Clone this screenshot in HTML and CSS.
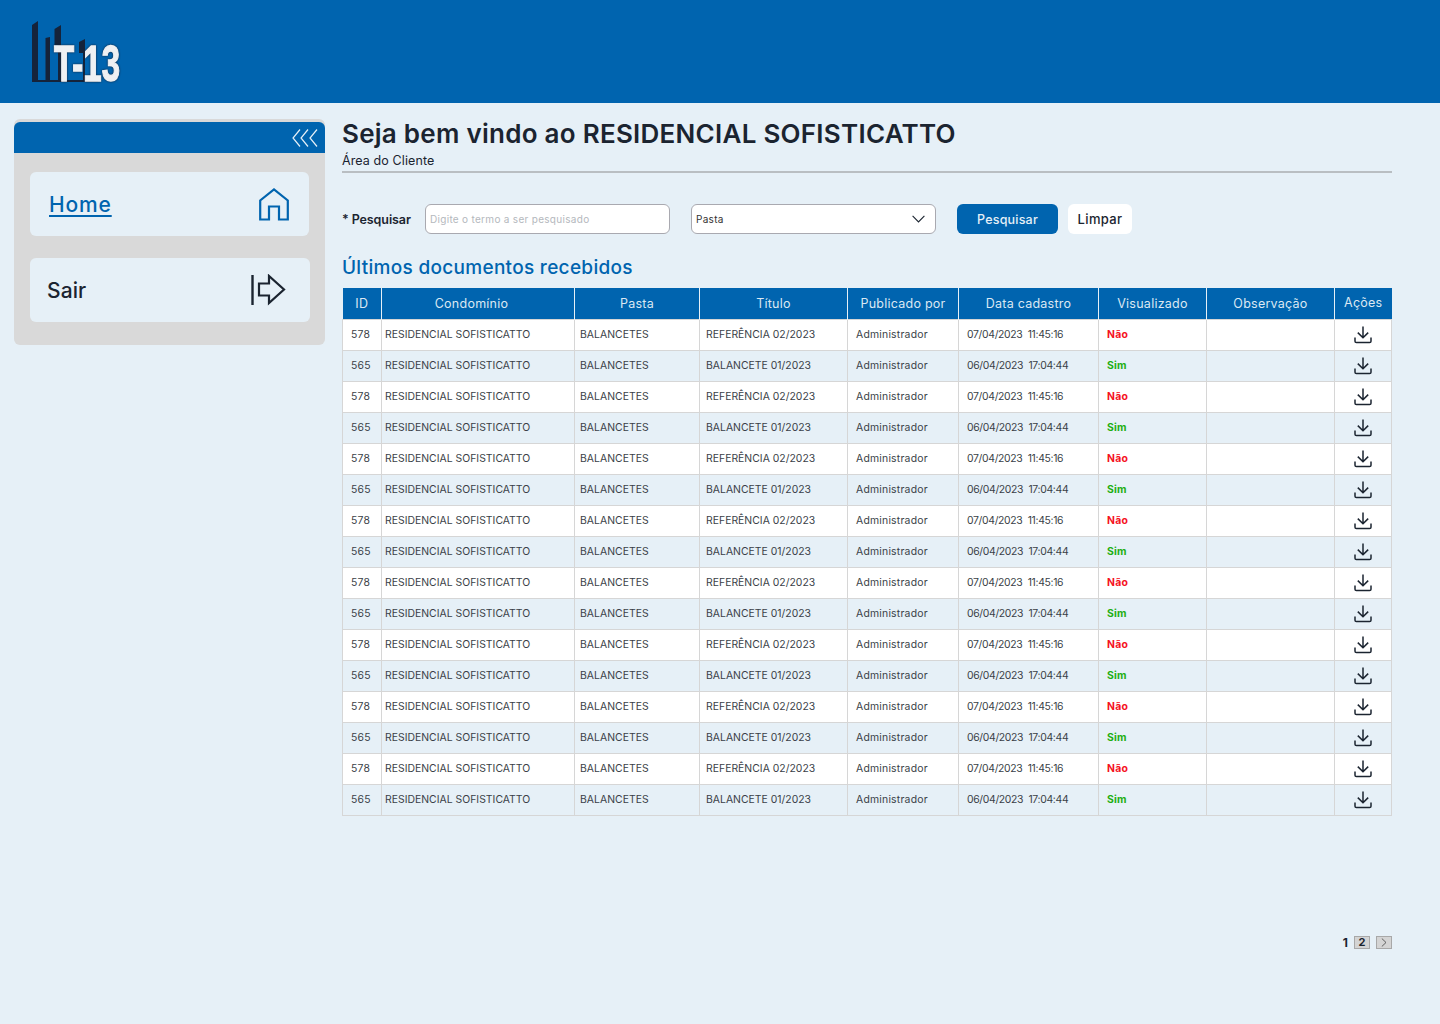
FILE: index.html
```html
<!DOCTYPE html>
<html lang="pt-BR">
<head>
<meta charset="utf-8">
<title>Área do Cliente</title>
<link rel="stylesheet" href="styles.css">
</head>
<body>
<svg class="defs" width="0" height="0" aria-hidden="true">
  <symbol id="dl" viewBox="0 0 18 18">
    <path d="M9 0.5V11.5M3.8 6.6L9 11.8L14.2 6.6M1 11.5V15.2Q1 16.6 2.4 16.6H15.6Q17 16.6 17 15.2V11.5" fill="none" stroke="#1b2430" stroke-width="1.5"/>
  </symbol>
</svg>
<header class="topbar">
  <svg class="logo" width="130" height="70" viewBox="0 0 130 70">
    <path class="logo-b" d="M2 64V7L8 3V64ZM15.5 64V20L20 19V64ZM24.5 11L31 7V64H28V27H24.5ZM49 24L55 21V64H53V35H49ZM2 62H68V64H2Z"/>
    <text class="logo-t" x="24" y="63" textLength="66" lengthAdjust="spacingAndGlyphs">T-13</text>
  </svg>
</header>
<div class="page">
  <aside class="sidebar">
    <div class="side-head">
      <svg width="26" height="20" viewBox="0 0 26 20"><path d="M8 1.5L1 10L8 18.5M16 1.5L9 10L16 18.5M25 1.5L18 10L25 18.5" fill="none" stroke="#e6f0f7" stroke-width="1.2"/></svg>
    </div>
    <nav class="side-nav">
      <a class="nav-card nav-home" href="#">
        <span class="nav-home-label">Home</span>
        <svg width="30" height="33" viewBox="0 0 30 33"><path d="M1.2 31.5V12.5L15 1.5L28.8 12.5V31.5H20V18.5H10V31.5Z" fill="none" stroke="#0064af" stroke-width="2.2"/></svg>
      </a>
      <a class="nav-card nav-exit" href="#">
        <span>Sair</span>
        <svg width="35" height="32" viewBox="0 0 35 32"><path d="M1.5 1V31" fill="none" stroke="#1b2430" stroke-width="2.4"/><path d="M8 9.5H18V2L33 15.5L18 29V21.5H8Z" fill="none" stroke="#1b2430" stroke-width="2.2"/></svg>
      </a>
    </nav>
  </aside>
  <main class="content">
    <h1 class="title">Seja bem vindo ao RESIDENCIAL SOFISTICATTO</h1>
    <p class="subtitle">Área do Cliente</p>
    <form class="search">
      <label class="search-label" for="q">* Pesquisar</label>
      <input class="field field-text" id="q" type="text" placeholder="Digite o termo a ser pesquisado">
      <div class="field field-select">
        <span>Pasta</span>
        <svg width="13" height="8" viewBox="0 0 13 8"><path d="M0.6 0.8L6.5 7L12.4 0.8" fill="none" stroke="#1b2430" stroke-width="1.1"/></svg>
      </div>
      <button class="btn btn-primary" type="button">Pesquisar</button>
      <button class="btn btn-light" type="button">Limpar</button>
    </form>
    <h2 class="section">Últimos documentos recebidos</h2>
    <table class="docs">
      <colgroup>
        <col class="c1"><col class="c2"><col class="c3"><col class="c4"><col class="c5"><col class="c6"><col class="c7"><col class="c8"><col class="c9">
      </colgroup>
      <thead>
        <tr><th>ID</th><th class="th-cond">Condomínio</th><th>Pasta</th><th>Título</th><th>Publicado por</th><th>Data cadastro</th><th>Visualizado</th><th>Observação</th><th class="th-acoes">Ações</th></tr>
      </thead>
      <tbody>
        <tr><td class="t-id">578</td><td class="t-c">RESIDENCIAL SOFISTICATTO</td><td class="t-p">BALANCETES</td><td class="t-t">REFERÊNCIA 02/2023</td><td class="t-u">Administrador</td><td class="t-d">07/04/2023&nbsp; 11:45:16</td><td class="t-v no">Não</td><td></td><td class="t-a"><svg class="dl"><use href="#dl"/></svg></td></tr>
        <tr><td class="t-id">565</td><td class="t-c">RESIDENCIAL SOFISTICATTO</td><td class="t-p">BALANCETES</td><td class="t-t">BALANCETE 01/2023</td><td class="t-u">Administrador</td><td class="t-d">06/04/2023&nbsp; 17:04:44</td><td class="t-v yes">Sim</td><td></td><td class="t-a"><svg class="dl"><use href="#dl"/></svg></td></tr>
        <tr><td class="t-id">578</td><td class="t-c">RESIDENCIAL SOFISTICATTO</td><td class="t-p">BALANCETES</td><td class="t-t">REFERÊNCIA 02/2023</td><td class="t-u">Administrador</td><td class="t-d">07/04/2023&nbsp; 11:45:16</td><td class="t-v no">Não</td><td></td><td class="t-a"><svg class="dl"><use href="#dl"/></svg></td></tr>
        <tr><td class="t-id">565</td><td class="t-c">RESIDENCIAL SOFISTICATTO</td><td class="t-p">BALANCETES</td><td class="t-t">BALANCETE 01/2023</td><td class="t-u">Administrador</td><td class="t-d">06/04/2023&nbsp; 17:04:44</td><td class="t-v yes">Sim</td><td></td><td class="t-a"><svg class="dl"><use href="#dl"/></svg></td></tr>
        <tr><td class="t-id">578</td><td class="t-c">RESIDENCIAL SOFISTICATTO</td><td class="t-p">BALANCETES</td><td class="t-t">REFERÊNCIA 02/2023</td><td class="t-u">Administrador</td><td class="t-d">07/04/2023&nbsp; 11:45:16</td><td class="t-v no">Não</td><td></td><td class="t-a"><svg class="dl"><use href="#dl"/></svg></td></tr>
        <tr><td class="t-id">565</td><td class="t-c">RESIDENCIAL SOFISTICATTO</td><td class="t-p">BALANCETES</td><td class="t-t">BALANCETE 01/2023</td><td class="t-u">Administrador</td><td class="t-d">06/04/2023&nbsp; 17:04:44</td><td class="t-v yes">Sim</td><td></td><td class="t-a"><svg class="dl"><use href="#dl"/></svg></td></tr>
        <tr><td class="t-id">578</td><td class="t-c">RESIDENCIAL SOFISTICATTO</td><td class="t-p">BALANCETES</td><td class="t-t">REFERÊNCIA 02/2023</td><td class="t-u">Administrador</td><td class="t-d">07/04/2023&nbsp; 11:45:16</td><td class="t-v no">Não</td><td></td><td class="t-a"><svg class="dl"><use href="#dl"/></svg></td></tr>
        <tr><td class="t-id">565</td><td class="t-c">RESIDENCIAL SOFISTICATTO</td><td class="t-p">BALANCETES</td><td class="t-t">BALANCETE 01/2023</td><td class="t-u">Administrador</td><td class="t-d">06/04/2023&nbsp; 17:04:44</td><td class="t-v yes">Sim</td><td></td><td class="t-a"><svg class="dl"><use href="#dl"/></svg></td></tr>
        <tr><td class="t-id">578</td><td class="t-c">RESIDENCIAL SOFISTICATTO</td><td class="t-p">BALANCETES</td><td class="t-t">REFERÊNCIA 02/2023</td><td class="t-u">Administrador</td><td class="t-d">07/04/2023&nbsp; 11:45:16</td><td class="t-v no">Não</td><td></td><td class="t-a"><svg class="dl"><use href="#dl"/></svg></td></tr>
        <tr><td class="t-id">565</td><td class="t-c">RESIDENCIAL SOFISTICATTO</td><td class="t-p">BALANCETES</td><td class="t-t">BALANCETE 01/2023</td><td class="t-u">Administrador</td><td class="t-d">06/04/2023&nbsp; 17:04:44</td><td class="t-v yes">Sim</td><td></td><td class="t-a"><svg class="dl"><use href="#dl"/></svg></td></tr>
        <tr><td class="t-id">578</td><td class="t-c">RESIDENCIAL SOFISTICATTO</td><td class="t-p">BALANCETES</td><td class="t-t">REFERÊNCIA 02/2023</td><td class="t-u">Administrador</td><td class="t-d">07/04/2023&nbsp; 11:45:16</td><td class="t-v no">Não</td><td></td><td class="t-a"><svg class="dl"><use href="#dl"/></svg></td></tr>
        <tr><td class="t-id">565</td><td class="t-c">RESIDENCIAL SOFISTICATTO</td><td class="t-p">BALANCETES</td><td class="t-t">BALANCETE 01/2023</td><td class="t-u">Administrador</td><td class="t-d">06/04/2023&nbsp; 17:04:44</td><td class="t-v yes">Sim</td><td></td><td class="t-a"><svg class="dl"><use href="#dl"/></svg></td></tr>
        <tr><td class="t-id">578</td><td class="t-c">RESIDENCIAL SOFISTICATTO</td><td class="t-p">BALANCETES</td><td class="t-t">REFERÊNCIA 02/2023</td><td class="t-u">Administrador</td><td class="t-d">07/04/2023&nbsp; 11:45:16</td><td class="t-v no">Não</td><td></td><td class="t-a"><svg class="dl"><use href="#dl"/></svg></td></tr>
        <tr><td class="t-id">565</td><td class="t-c">RESIDENCIAL SOFISTICATTO</td><td class="t-p">BALANCETES</td><td class="t-t">BALANCETE 01/2023</td><td class="t-u">Administrador</td><td class="t-d">06/04/2023&nbsp; 17:04:44</td><td class="t-v yes">Sim</td><td></td><td class="t-a"><svg class="dl"><use href="#dl"/></svg></td></tr>
        <tr><td class="t-id">578</td><td class="t-c">RESIDENCIAL SOFISTICATTO</td><td class="t-p">BALANCETES</td><td class="t-t">REFERÊNCIA 02/2023</td><td class="t-u">Administrador</td><td class="t-d">07/04/2023&nbsp; 11:45:16</td><td class="t-v no">Não</td><td></td><td class="t-a"><svg class="dl"><use href="#dl"/></svg></td></tr>
        <tr><td class="t-id">565</td><td class="t-c">RESIDENCIAL SOFISTICATTO</td><td class="t-p">BALANCETES</td><td class="t-t">BALANCETE 01/2023</td><td class="t-u">Administrador</td><td class="t-d">06/04/2023&nbsp; 17:04:44</td><td class="t-v yes">Sim</td><td></td><td class="t-a"><svg class="dl"><use href="#dl"/></svg></td></tr>
      </tbody>
    </table>
    <div class="pager">
      <span class="pg-current">1</span>
      <span class="pg-box">2</span>
      <span class="pg-box"><svg width="6" height="9" viewBox="0 0 6 9"><path d="M0.8 0.5L5 4.5L0.8 8.5" fill="none" stroke="#444" stroke-width="0.8"/></svg></span>
    </div>
  </main>
</div>
</body>
</html>
```
FILE: styles.css
```css
* { box-sizing: border-box; }
html, body { margin: 0; padding: 0; }
body {
  background: #e6f0f7;
  color: #1b2430;
  font-family: Inter, "Noto Sans", sans-serif;
  min-height: 1024px;
}
.defs { display: block; height: 0; }
.topbar {
  height: 103px;
  background: #0064af;
  padding: 18px 0 0 30px;
}
.logo { display: block; }
.logo-b { fill: #15233a; }
.logo-t {
  font-family: "Liberation Sans", sans-serif;
  font-weight: 700;
  font-size: 50px;
  fill: #eef0f3;
  stroke: #eef0f3;
  stroke-width: 1.4px;
  filter: drop-shadow(0 0 0.8px #15233a);
}
.page {
  display: flex;
  align-items: flex-start;
  padding: 16px 48px 0 14px;
}
.sidebar {
  width: 311px;
  height: 226px;
  background: #d9d9d9;
  border-radius: 6px;
  padding-top: 3px;
  flex: none;
}
.side-head {
  height: 31px;
  background: #0064af;
  border-radius: 6px 6px 0 0;
  display: flex;
  align-items: center;
  justify-content: flex-end;
  padding-right: 7px;
}
.side-nav {
  display: flex;
  flex-direction: column;
  gap: 22px;
  padding: 19px 15px 0 16px;
}
.nav-card {
  height: 64px;
  background: #e6f0f7;
  border-radius: 6px;
  display: flex;
  align-items: center;
  justify-content: space-between;
  font-size: 21px;
  font-weight: 500;
  letter-spacing: 0.1px;
  text-decoration: none;
  color: #1b2430;
}
.nav-home { margin-right: 1px; padding: 0 20px 0 19px; color: #0064af; letter-spacing: 0.85px; }
.nav-home-label { text-decoration: underline; text-underline-offset: 3px; }
.nav-exit { padding: 0 24px 0 17px; }
.content {
  width: 1050px;
  margin-left: 17px;
  flex: none;
}
.title {
  margin: 0;
  font-size: 26px;
  line-height: 30px;
  font-weight: 600;
  letter-spacing: 0.26px;
}
.subtitle {
  margin: 2px 0 0;
  font-size: 12.5px;
  line-height: 20px;
  height: 22px;
  border-bottom: 2px solid #b9bec2;
  letter-spacing: 0.1px;
}
.search {
  display: flex;
  align-items: center;
  margin-top: 31px;
  height: 30px;
}
.search-label {
  width: 83px;
  font-size: 12.5px;
  font-weight: 600;
  letter-spacing: -0.1px;
  flex: none;
}
.field {
  height: 30px;
  width: 245px;
  background: #fff;
  border: 1px solid #a9a9b0;
  border-radius: 6px;
  font-family: inherit;
  font-size: 10px;
  padding: 0 4px;
  letter-spacing: 0.3px;
  flex: none;
}
.field-text::placeholder { color: #b4b8bd; opacity: 1; }
.field-select {
  margin-left: 21px;
  display: flex;
  align-items: center;
  justify-content: space-between;
  padding-right: 10px;
  color: #333;
}
.btn {
  height: 30px;
  border: 0;
  border-radius: 6px;
  font-family: inherit;
  font-size: 12.5px;
  font-weight: 500;
  letter-spacing: 0.2px;
  flex: none;
}
.btn-primary { width: 101px; margin-left: 21px; background: #0064af; color: #e6f0f7; }
.btn-light { width: 64px; margin-left: 10px; background: #fff; color: #1b2430; letter-spacing: 0.35px; font-size: 13px; }
.section {
  margin: 22px 0 0;
  font-size: 19px;
  line-height: 24px;
  height: 32px;
  font-weight: 500;
  color: #0064af;
  letter-spacing: 0.3px;
}
.docs {
  width: 1049px;
  table-layout: fixed;
  border-collapse: collapse;
  font-size: 10.4px;
  color: #3a3f47;
}
.c1 { width: 39px; }
.c2 { width: 193px; }
.c3 { width: 125px; }
.c4 { width: 148px; }
.c5 { width: 111px; }
.c6 { width: 140px; }
.c7 { width: 108px; }
.c8 { width: 128px; }
.c9 { width: 57px; }
.docs th {
  height: 31px;
  padding: 0;
  background: #0064af;
  color: #dbe8f3;
  font-size: 12.5px;
  font-weight: 400;
  letter-spacing: 0.25px;
  border-left: 1px solid #e6f0f7;
}
.docs th:first-child { border-left: 0; }
.docs .th-cond { padding-right: 13px; }
.docs .th-acoes { padding-bottom: 2px; }
.docs td {
  height: 31px;
  padding: 0;
  border: 1px solid #d6d6d6;
  white-space: nowrap;
  letter-spacing: 0.22px;
}
.docs tbody tr:nth-child(odd) { background: #fff; }
.docs .t-id { padding-left: 8px; }
.docs .t-c { padding-left: 3px; letter-spacing: 0.02px; }
.docs .t-p { padding-left: 5px; letter-spacing: 0.04px; }
.docs .t-t { padding-left: 6px; letter-spacing: 0.02px; }
.docs .t-u { padding-left: 8px; }
.docs .t-d { padding-left: 8px; letter-spacing: -0.32px; }
.docs .t-v { padding-left: 8px; font-weight: 700; }
.no { color: #f5121e; }
.yes { color: #1fae12; }
.t-a { text-align: center; line-height: 0; }
.dl { width: 18px; height: 18px; display: inline-block; vertical-align: middle; }
.pager {
  display: flex;
  justify-content: flex-end;
  align-items: center;
  gap: 6px;
  margin-top: 119px;
  font-size: 11px;
  font-weight: 700;
}
.pg-current { font-size: 12px; }
.pg-box {
  width: 16px;
  height: 13px;
  background: #d4d4d4;
  border: 1px solid #a8a8a8;
  display: flex;
  align-items: center;
  justify-content: center;
  line-height: 1;
}
```
